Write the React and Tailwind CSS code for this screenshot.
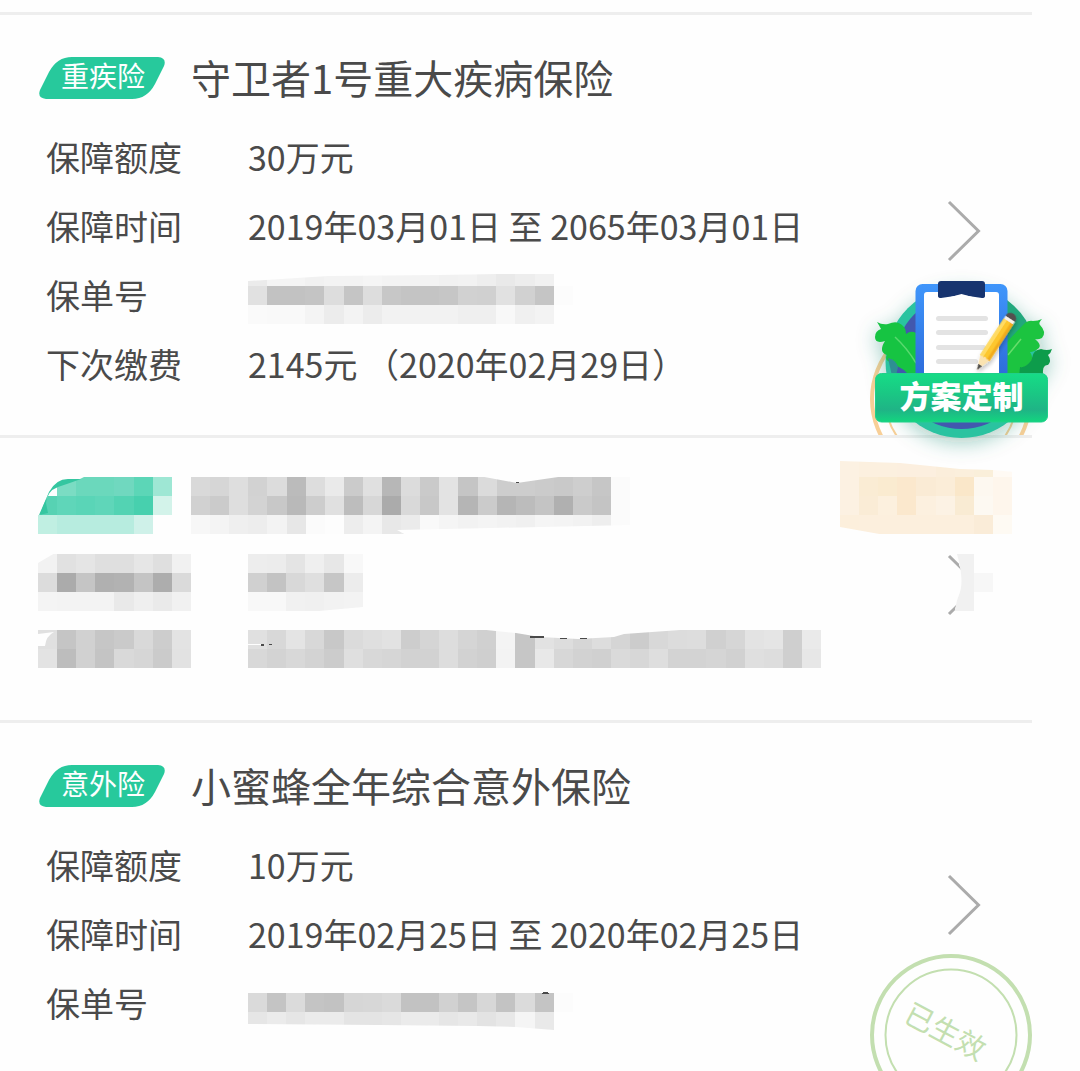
import React from 'react';

const CELL = 19.1;

const policies = [
  {
    id: 'critical',
    tag: '重疾险',
    title: '守卫者1号重大疾病保险',
    rows: [
      { label: '保障额度', value: '30万元' },
      { label: '保障时间', value: '2019年03月01日 至 2065年03月01日' },
      {
        label: '保单号',
        mosaic: {
          y: 8,
          rows: [
            'ebebeb f4f4f4 f4f4f4 f1f1f1 f3f3f3 f3f3f3 f5f5f5 f3f3f3 f3f3f3 f3f3f3 f1f1f1 f2f2f2 eeeeee e9e9e9 ededed f1f1f1',
            'e1e1e1 c2c2c2 c2c2c2 c4c4c4 dddddd c5c5c5 dddddd c7c7c7 c4c4c4 c4c4c4 c6c6c6 d1d1d1 d0d0d0 e1e1e1 d1d1d1 c5c5c5 fcfcfc',
            'fafafa f9f9f9 f9f9f9 f4f4f4 ececec f3f3f3 ececec f2f2f2 f2f2f2 f2f2f2 f2f2f2 efefef efefef f8f8f8 f0f0f0 f3f3f3',
          ],
          cut: 'M0 7H330V15H250L190 16L80 17L0 22Z',
        },
      },
      { label: '下次缴费', value: '2145元 （2020年02月29日）' },
    ],
    seal: { color: '#f8cf97' },
  },
  {
    id: 'hidden',
    hidden: true,
    rows: [
      {
        labelMosaic: {
          y: 10,
          rows: [
            'f2f2f2 e1e1e1 e5e5e5 dfdfdf dfdfdf e6e6e6 dfdfdf f1f1f1',
            'dcdcdc ababab c5c5c5 b0b0b0 b2b2b2 c4c4c4 adadad dadada',
            'f4f4f4 f3f3f3 f3f3f3 f3f3f3 e9e9e9 efefef eaeaea f1f1f1',
          ],
          cut: 'M0 9H17L0 19Z',
        },
        mosaic: {
          y: 10,
          rows: [
            'ededed ececec e4e4e4 efefef e7e7e7 f8f8f8',
            'd0d0d0 c3c3c3 d8d8d8 dfdfdf c6c6c6 ececec',
            'f8f8f8 f8f8f8 f1f1f1 f0f0f0 f2f2f2 f3f3f3',
          ],
          cut: 'M60 68L115 63V70H60Z',
        },
      },
      {
        labelMosaic: {
          y: 17,
          rows: [
            'e0e0e0 c5c5c5 d1d1d1 c6c6c6 cacaca d9d9d9 cdcdcd e3e3e3',
            'e3e3e3 bdbdbd d1d1d1 c4c4c4 d9d9d9 d6d6d6 cbcbcb e2e2e2',
          ],
          cut: 'M0 21L16 19Q8 23 7 33H0Z',
        },
        mosaic: {
          y: 17,
          rows: [
            'e0e0e0 d8d8d8 e4e4e4 d8d8d8 c8c8c8 dbdbdb dfdfdf e2e2e2 cdcdcd d5d5d5 dddddd d5d5d5 d0d0d0 f4f4f4 c6c6c6 e2e2e2 dddddd d6d6d6 dddddd d5d5d5 cccccc d8d8d8 dcdcdc dddddd d0d0d0 d6d6d6 e3e3e3 e5e5e5 cfcfcf eaeaea',
            'd8d8d8 d3d3d3 d8d8d8 d3d3d3 cccccc dfdfdf d8d8d8 d6d6d6 d2d2d2 d2d2d2 dddddd d2d2d2 cfcfcf f3f3f3 c6c6c6 e8e8e8 d7d7d7 d2d2d2 d0d0d0 dadada d7d7d7 dedede d3d3d3 d3d3d3 d5d5d5 d1d1d1 dfdfdf dddddd cfcfcf e7e7e7',
          ],
          cut: 'M0 31H14V32H0ZM229 16L268 20L292 24L330 26L366 24L376 21L432 17V16Z',
          ink: 'M282 23H296V24.5H282ZM312 25H319V26H312ZM332 25H339V26H332ZM13 31H16V33H13ZM21 31H24V32H21Z',
        },
      },
    ],
  },
  {
    id: 'accident',
    tag: '意外险',
    title: '小蜜蜂全年综合意外保险',
    rows: [
      { label: '保障额度', value: '10万元' },
      { label: '保障时间', value: '2019年02月25日 至 2020年02月25日' },
      {
        label: '保单号',
        mosaic: {
          y: 26,
          rows: [
            'dadada c4c4c4 dbdbdb c4c4c4 c2c2c2 d6d6d6 d7d7d7 dadada c2c2c2 c2c2c2 d1d1d1 c5c5c5 d7d7d7 c3c3c3 dbdbdb c4c4c4 fcfcfc',
            'e6e6e6 ebebeb e6e6e6 ebebeb ebebeb e4e4e4 e4e4e4 e6e6e6 ebebeb ebebeb e6e6e6 e9e9e9 e3e3e3 e8e8e8 f5f5f5 e9e9e9',
          ],
          cut: 'M0 57L130 58L230 59L268 60L306 63V68H0Z',
          ink: 'M293 27Q297 23 302 27Z',
        },
      },
    ],
    seal: { text: '已生效', color: '#c3dfb0' },
  },
];

const hiddenTag = {
  y: 7,
  rows: [
    '- 7bdcc3 6bd8bc 6bd8bc 70d8bf 5cd6b7 9ee7d4',
    '57d2b3 5fd6b9 5ad5b7 5fd6b9 53d3b3 47d0ae d3f3ea',
    'c0efe2 b7ecdf b7ecdf b7ecdf b7ecdf cff1e9',
  ],
  cut: 'M0 7H46L42 9L26 10Q12 14 2 45H0Z',
};

const hiddenTitle = {
  y: 7,
  rows: [
    'd9d9d9 d6d6d6 dedede d2d2d2 dcdcdc bbbbbb dddddd eaeaea cbcbcb e0e0e0 b7b7b7 dcdcdc cacaca e3e3e3 c5c5c5 dbdbdb cdcdcd cdcdcd cbcbcb c9c9c9 cecece c6c6c6 fbfbfb',
    'd1d1d1 cbcbcb dedede d3d3d3 c8c8c8 b9b9b9 cdcdcd e0e0e0 bdbdbd d7d7d7 ababab d9d9d9 c8c8c8 e3e3e3 b5b5b5 cbcbcb b5b5b5 bcbcbc c4c4c4 b0b0b0 cacaca c4c4c4 fbfbfb',
    'f7f7f7 f4f4f4 efefef ededed f3f3f3 e7e7e7 fbfbfb fdfdfd ededed f4f4f4 e8e8e8 ebebeb f9f9f9 f5f5f5 f2f2f2 f4f4f4 f2f2f2 f0f0f0 f5f5f5 f4f4f4 f2f2f2 eeeeee fbfbfb',
  ],
  cut: 'M288 6L326 13L374 6ZM206 60L300 58L440 55V66H217Z',
  ink: 'M325 12H328V13H325Z',
};

const hiddenStatus = {
  y: -12,
  rows: [
    'fcf1e2 fcf0df fcf0df fcefdf fcefdf fbeedb fbefdc faefda fffaf4',
    'fcf1e2 faecd4 faebd0 fbe8cd faebd5 fbedd8 fae7c9 fdf8f0 fef6ec',
    'fcf1e2 faecd6 fcf0de fbe8cd fcf0df fcf2e4 f9ebd3 fdf9f2 fef6ec',
    'fcefdc fcefdd fcefdd fcefdd fcefdd fcefdd fcefdd faecd8 fefaf3',
  ],
  cut: 'M0 -13H174V2L153 0L120 -1L60 -7L0 -9ZM0 57L45 65V67H0Z',
};

function Mosaic({ data, className = '', children }) {
  const cols = Math.max(...data.rows.map((row) => row.split(' ').length));
  return (
    <svg width={Math.round(cols * CELL)} height="62" shapeRendering="crispEdges" aria-hidden="true" className={`shrink-0 overflow-visible ${className}`}>
      {data.rows.map((row, r) => row.split(' ').map((color, c) => {
        const x = Math.round(c * CELL);
        const y = Math.round(r * CELL);
        return color === '-' ? null : (
          <rect key={`${r}-${c}`} x={x} y={data.y + y} width={Math.round((c + 1) * CELL) - x} height={Math.round((r + 1) * CELL) - y} fill={`#${color}`} />
        );
      }))}
      <path d={data.cut} fill="#fefefe" shapeRendering="auto" />
      {data.ink && <path d={data.ink} fill="#4a4a4a" />}
      {children}
    </svg>
  );
}

function Tag({ children }) {
  return (
    <span className="relative ml-px flex h-[42px] w-[126px] shrink-0 items-center justify-center text-[28px] leading-none text-white">
      <svg viewBox="0 0 126 42" className="absolute inset-0 h-full w-full" aria-hidden="true">
        <path d="M27 0H119Q128 1 125 9L116 27Q108 42 93 42H7Q-2 41 1 33L10 15Q18 0 33 0Z" fill="#27c99c" />
      </svg>
      <span className="relative pb-[6px] pl-[2px]">{children}</span>
    </span>
  );
}

function Seal({ text, color }) {
  return (
    <svg viewBox="0 0 162 162" className="pointer-events-none absolute -bottom-[45px] right-0 size-[162px]">
      <circle cx="81" cy="81" r="79" fill="none" stroke={color} strokeWidth="4" />
      <circle cx="81" cy="81" r="65.5" fill="none" stroke={color} strokeWidth="2" />
      {text && <text x="75" y="88" textAnchor="middle" transform="rotate(28 75 78)" fill={color} fontSize="29">{text}</text>}
    </svg>
  );
}

function Chevron({ hidden }) {
  return (
    <svg viewBox="0 0 32 60" className="h-[60px] w-8 overflow-visible" aria-hidden="true">
      <path d="M1 1L30.500 30L1 59" fill="none" stroke="#ababab" strokeWidth="3" />
      {hidden && (
        <g>
          <path d="M11 0V10Q19 25 11 42L7 54L12 62H36V0Z" fill="#fefefe" />
          <path d="M9 -1H26V56H7Q8 46 12 37Q16 24 9 -1Z" fill="#f1f1f1" />
          <path d="M26 18H45V37H26Z" fill="#f7f7f7" />
        </g>
      )}
    </svg>
  );
}

function PolicyCard({ policy }) {
  return (
    <article className="relative mr-12 flex overflow-hidden border-t-3 border-[#eeeeee] pb-[38px] pt-8 last:pb-[35px]">
      <div className="min-w-0 flex-1 pl-[38px]">
        <header className="flex h-[62px] items-center">
          {policy.hidden ? (
            <>
              <Mosaic data={hiddenTag}>
                <path d="M1 45L11 22Q18 9 30 9H43Q32 13 20 17Q9 21 8 33L10 43Z" fill="#35c6a0" shapeRendering="auto" />
              </Mosaic>
              <Mosaic data={hiddenTitle} className="ml-[19px]" />
              <Mosaic data={hiddenStatus} className="-mr-16 ml-auto" />
            </>
          ) : (
            <>
              <Tag>{policy.tag}</Tag>
              <h2 className="ml-[26px] whitespace-nowrap pb-[2px] text-[40px] leading-none">{policy.title}</h2>
            </>
          )}
        </header>
        <dl className="pl-2 pt-3 text-[34px] leading-[71px]">
          {policy.rows.map((row, index) => (
            <div key={index} className="flex h-[69px]">
              <dt className="w-[202px] shrink-0">
                {row.labelMosaic ? <Mosaic data={row.labelMosaic} className="-ml-2" /> : row.label}
              </dt>
              <dd className="whitespace-nowrap">{row.mosaic ? <Mosaic data={row.mosaic} /> : row.value}</dd>
            </div>
          ))}
        </dl>
      </div>
      {policy.seal && <Seal text={policy.seal.text} color={policy.seal.color} />}
      <button type="button" aria-label="查看保单" className="relative flex w-[84px] shrink-0 items-center pt-[18px]">
        <Chevron hidden={policy.hidden} />
      </button>
    </article>
  );
}

function PlanButton() {
  return (
    <button type="button" aria-label="方案定制" className="absolute right-5 top-[270px] size-[200px]">
      <svg viewBox="0 0 200 200" className="h-full w-full overflow-visible">
        <defs>
          <linearGradient id="banner" x1="0" y1="0" x2="0" y2="1">
            <stop offset="0" stopColor="#16dc86" />
            <stop offset="0.4" stopColor="#1ac884" />
            <stop offset="0.75" stopColor="#1fb486" />
            <stop offset="1" stopColor="#13d67f" />
          </linearGradient>
          <linearGradient id="board" x1="0" y1="0" x2="0" y2="1">
            <stop offset="0" stopColor="#3f96fb" />
            <stop offset="1" stopColor="#2c68d8" />
          </linearGradient>
          <filter id="glow" x="-30%" y="-30%" width="160%" height="160%">
            <feDropShadow dx="0" dy="5" stdDeviation="10" floodColor="#1b7f65" floodOpacity="0.38" />
          </filter>
          <filter id="soft" x="-50%" y="-50%" width="200%" height="200%">
            <feDropShadow dx="2" dy="2" stdDeviation="2" floodColor="#000000" floodOpacity="0.25" />
          </filter>
        </defs>
        <g filter="url(#glow)">
          <circle cx="101.500" cy="92" r="76" fill="#2bc3a0" />
          <circle cx="101.500" cy="92" r="67" fill="#4358ae" />
          <path d="M147 30Q163 42 170 58L165 106H147Z" fill="#20a87c" />
          <path d="M17 52Q22 55 28 54Q37 50 42 55Q46 58 46 64Q51 60 56 63V106H50L44 100L37 96Q36 92 30 92Q24 90 27 85Q18 82 25 71Q15 74 15 67Q15 61 21 59Q19 55 17 52Z" fill="#17c443" />
          <path d="M28 88Q36 90 38 97L36 106H32Z" fill="#2f8f93" />
          <path d="M35 67Q47 78 56 93" fill="none" stroke="#59d96e" strokeWidth="1.500" />
          <path d="M156 106Q159 93 172 88Q173 80 181 79Q187 81 192 79Q191 83 188 85Q192 91 188 95Q182 94 183 106Z" fill="#119c4b" />
          <path d="M147 72Q156 62 165 53Q169 50 173 51Q178 51 182 49Q178 53 180 55Q187 62 182 68Q178 70 175 69Q182 75 179 78Q174 82 170 82Q174 88 170 92Q165 98 160 97L159 106H147Z" fill="#1dc43f" />
          <path d="M148 85L161 69" stroke="#66dd6b" strokeWidth="1.500" />
        </g>
        <rect x="55.500" y="14" width="92" height="100" rx="7" fill="url(#board)" />
        <path d="M64 25Q64 22 67 22H136Q139 22 139 25V106H64Z" fill="#ffffff" />
        <path d="M81 11H122Q125 11 125 14V26Q125 28 122 28L101.500 25L81 28Q78 28 78 26V14Q78 11 81 11Z" fill="#17346f" />
        <path d="M87 28L101.500 24L116 28Z" fill="#ffffff" />
        <g fill="#e3e3e3">
          <rect x="76" y="46" width="52" height="5" rx="2.500" />
          <rect x="76" y="60" width="52" height="5" rx="2.500" />
          <rect x="76" y="75" width="50" height="5" rx="2.500" />
          <rect x="76" y="89" width="42" height="5" rx="2.500" />
        </g>
        <g transform="translate(117 100) rotate(33)" filter="url(#soft)">
          <path d="M0 0L-5.500 -15H5.500Z" fill="#fbe3b0" />
          <path d="M0 0L-2.200 -6H2.200Z" fill="#4b4b4b" />
          <path d="M-5.500 -14Q-3.500 -17 -1.500 -14Q0 -17 2 -14Q4 -17 5.500 -14V-58H-5.500Z" fill="#fdc72e" />
          <path d="M-5.500 -14V-58H-2V-15Z" fill="#ffdb63" />
          <path d="M2.500 -15L5.500 -14V-58H2.500Z" fill="#f2ac1d" />
          <path d="M-5.500 -58H5.500V-61H-5.500Z" fill="#f7f2ea" />
          <path d="M-5.500 -61V-63Q-4 -67 0 -67Q4 -67 5.500 -63V-61Z" fill="#54504f" />
        </g>
        <rect x="15.500" y="103.500" width="172" height="48.500" rx="6" fill="url(#banner)" stroke="#20cf8a" />
        <text x="101.500" y="138" textAnchor="middle" fill="#ffffff" fontSize="31" fontWeight="900">方案定制</text>
      </svg>
    </button>
  );
}

export default function App() {
  return (
    <main className="relative min-h-screen bg-[#fefefe] pt-3 font-['Noto_Sans_CJK_SC','Noto_Sans',sans-serif] text-[#4a4a4a]">
      <div>
        {policies.map((policy) => <PolicyCard key={policy.id} policy={policy} />)}
      </div>
      <PlanButton />
    </main>
  );
}
